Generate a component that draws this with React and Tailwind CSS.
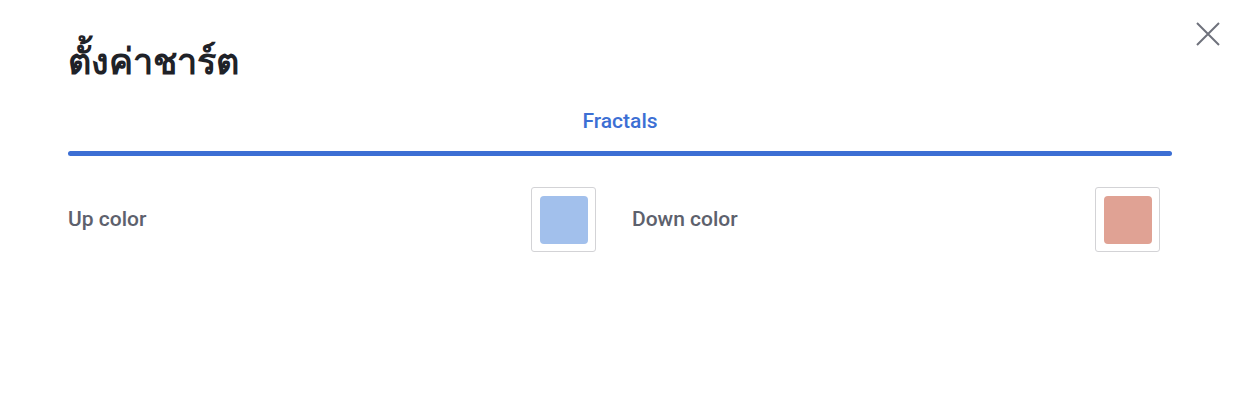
export default function App() {
  return (
    <div className="relative w-[1242px] h-[400px] bg-white font-['Roboto','Noto_Sans',sans-serif]">
      <button className="absolute right-[20px] top-[20px] w-[28px] h-[28px] flex items-center justify-center">
        <svg width="28" height="28" viewBox="0 0 28 28" fill="none" stroke="#6f727c" strokeWidth="2">
          <path d="M3 3 L25 25 M25 3 L3 25" />
        </svg>
      </button>
      <div className="pl-[68px] pr-[70px] pt-[36px]">
        <h1 className="text-[36px] leading-[52px] font-bold text-[#1f2228]">ตั้งค่าชาร์ต</h1>
        <div className="mt-[18px] flex flex-col items-center">
          <div className="text-[21px] leading-[30px] font-medium text-[#3c6fd4]">Fractals</div>
          <div className="mt-[15px] w-full h-[5px] rounded-full bg-[#3c6fd4]"></div>
        </div>
        <div className="mt-[31px] grid grid-cols-[528px_528px] gap-x-[36px]">
          <ColorRow label="Up color" color="bg-[#a2c0ec]" />
          <ColorRow label="Down color" color="bg-[#e0a294]" />
        </div>
      </div>
    </div>
  );
}

function ColorRow({ label, color }) {
  return (
    <div className="flex items-center justify-between h-[65px]">
      <span className="text-[21px] font-medium text-[#5d616d]">{label}</span>
      <div className="w-[65px] h-[65px] border border-[#d3d3d6] rounded-[3px] flex items-center justify-center">
        <div className={"w-[48px] h-[48px] rounded-[4px] " + color}></div>
      </div>
    </div>
  );
}
